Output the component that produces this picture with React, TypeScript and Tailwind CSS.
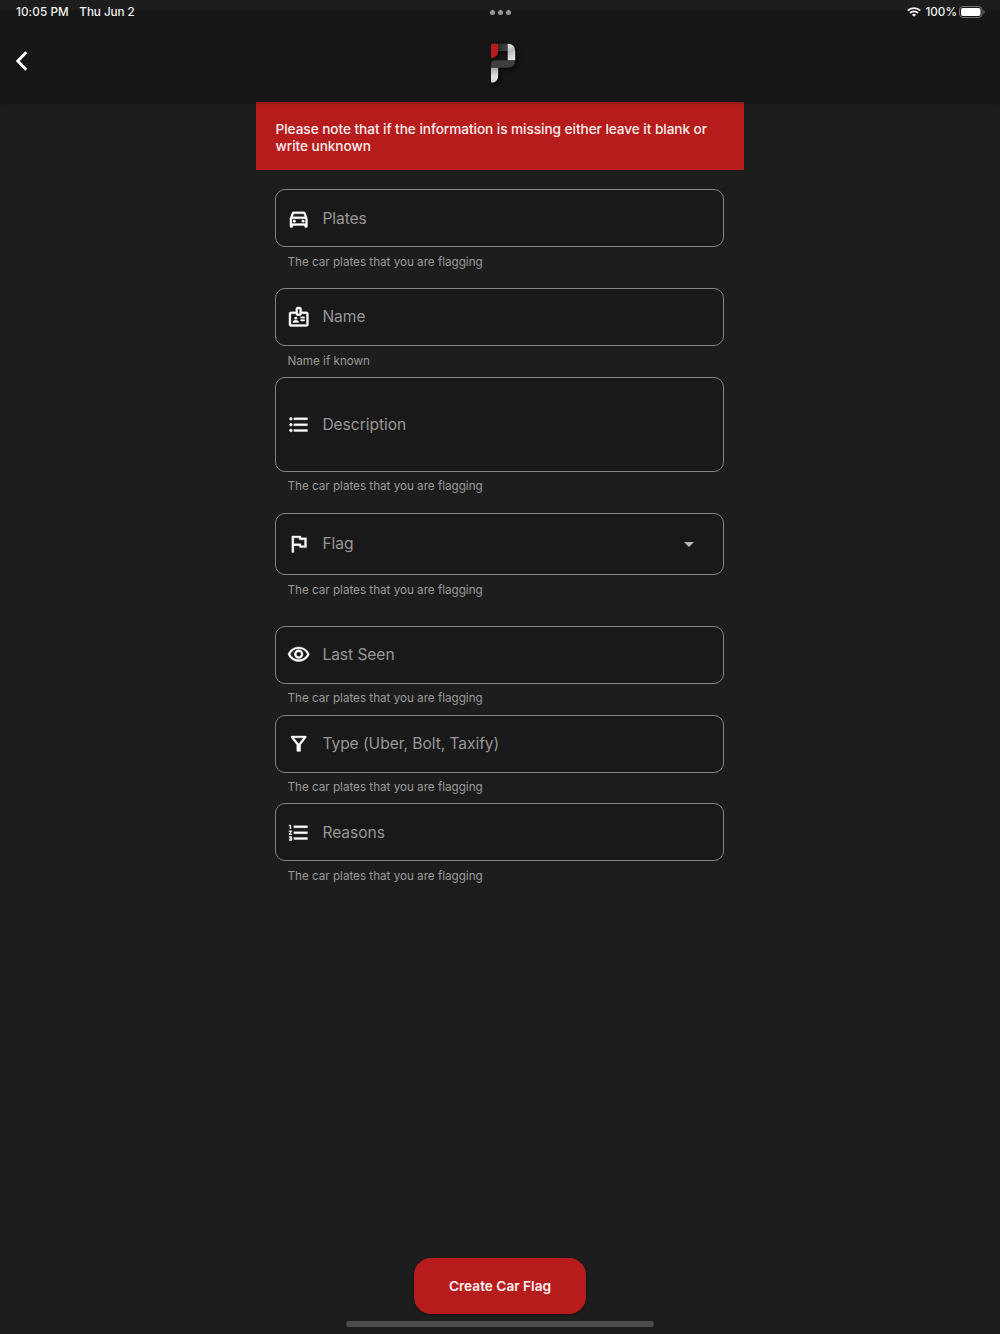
import type { IconType } from "react-icons";
import {
  MdArrowDropDown,
  MdFormatListBulleted,
  MdFormatListNumbered,
  MdOutlineBadge,
  MdOutlineDirectionsCar,
  MdOutlineFilterAlt,
  MdOutlineFlag,
  MdOutlineVisibility,
} from "react-icons/md";

interface Field {
  label: string;
  helper: string;
  icon: IconType;
  box: string;
  spacing: string;
  helperGap: string;
  dropdown?: boolean;
}

const helper = "The car plates that you are flagging";

const fields: Field[] = [
  { label: "Plates", helper, icon: MdOutlineDirectionsCar, box: "h-[58px] pt-0.5", spacing: "mb-[41px]", helperGap: "mt-[7px]" },
  { label: "Name", helper: "Name if known", icon: MdOutlineBadge, box: "h-[58px]", spacing: "mb-[31px]", helperGap: "mt-[7px]" },
  { label: "Description", helper, icon: MdFormatListBulleted, box: "h-[95px]", spacing: "mb-[41px]", helperGap: "mt-1.5" },
  { label: "Flag", helper, icon: MdOutlineFlag, box: "h-[62px]", spacing: "mb-[51px]", helperGap: "mt-[7px]", dropdown: true },
  { label: "Last Seen", helper, icon: MdOutlineVisibility, box: "h-[58px]", spacing: "mb-[31px]", helperGap: "mt-1.5" },
  { label: "Type (Uber, Bolt, Taxify)", helper, icon: MdOutlineFilterAlt, box: "h-[58px]", spacing: "mb-[30px]", helperGap: "mt-1.5" },
  { label: "Reasons", helper, icon: MdFormatListNumbered, box: "h-[58px] pt-0.5", spacing: "mb-[31px]", helperGap: "mt-[7px]" },
];

const StatusBar = () => (
  <div className="flex h-6 items-center justify-between bg-linear-to-b from-[#1d1d1d] from-[10px] to-[#161616] to-[10px] pl-4 pr-[15px] text-[11.7px] font-medium text-[#f2f2f2]">
    <div className="flex w-[200px] gap-[10.5px] pt-0.5">
      <span className="tracking-[0.1px]">10:05 PM</span>
      <span className="tracking-[-0.05px]">Thu Jun 2</span>
    </div>
    <div className="flex gap-[3px]">
      <span className="size-[5px] rounded-full bg-[#9a9a9a]" />
      <span className="size-[5px] rounded-full bg-[#9a9a9a]" />
      <span className="size-[5px] rounded-full bg-[#9a9a9a]" />
    </div>
    <div className="flex w-[200px] items-center justify-end">
      <svg className="mr-1 h-[10px] w-[14px]" viewBox="0 0 14 10" fill="none" stroke="#fff" strokeWidth="1.8">
        <path d="M0.7 3.6a9 9 0 0 1 12.6 0" />
        <path d="M3 6a5.7 5.7 0 0 1 8 0" />
        <path d="M7 9.8 5 7.8a2.9 2.9 0 0 1 4 0z" fill="#fff" stroke="none" />
      </svg>
      <span className="mr-[2px] pt-0.5">100%</span>
      <svg className="h-[12px] w-[26px]" viewBox="0 0 26 12">
        <rect x="0.5" y="0.5" width="22.5" height="11" rx="3.4" fill="none" stroke="#747474" />
        <rect x="2" y="2" width="19.5" height="8" rx="2" fill="#fff" />
        <path d="M24.3 4.2q1.4.4 1.4 1.8t-1.4 1.8z" fill="#747474" />
      </svg>
    </div>
  </div>
);

const Logo = () => (
  <svg className="h-[48px] w-[36px] drop-shadow-[2px_2px_2px_rgba(0,0,0,0.7)]" viewBox="0 0 36 48">
    <defs>
      <linearGradient id="side" x1="0" y1="0" x2="0.3" y2="1">
        <stop offset="0" stopColor="#f2f2f2" />
        <stop offset="0.5" stopColor="#b5b5b5" />
        <stop offset="1" stopColor="#e6e6e6" />
      </linearGradient>
      <linearGradient id="stem" x1="0" y1="0" x2="0" y2="1">
        <stop offset="0" stopColor="#a5a5a5" />
        <stop offset="0.6" stopColor="#e4e4e4" />
        <stop offset="1" stopColor="#d2d2d2" />
      </linearGradient>
      <linearGradient id="top" x1="0" y1="0" x2="1" y2="0">
        <stop offset="0" stopColor="#2a2a2a" />
        <stop offset="1" stopColor="#414141" />
      </linearGradient>
    </defs>
    <path d="M8 3.8h9.6v7.2H8z" fill="url(#top)" />
    <path d="M1 5.3q0-1.5 1.5-1.5H8v8q0 6-7 6.2z" fill="#b71c1c" />
    <path d="M17.7 3.8q7.5 0 7.5 7.5v9.2h-7.5z" fill="url(#side)" />
    <path d="M1 27.8v-3.5q0-4 4-4h20.2q0 7.5-7 7.5z" fill="#3e3e3e" />
    <path d="M1 27.8h7.2v7q0 7.5-5.7 7.9-1.5 0-1.5-1.5z" fill="url(#stem)" />
  </svg>
);

const FormField = ({ field }: { field: Field }) => {
  const Icon = field.icon;
  return (
    <div className={`relative ${field.spacing}`}>
      <div className={`flex items-center rounded-[10px] border border-[#858585] bg-[#191919] pl-[11px] ${field.box}`}>
        <Icon className="size-[23.4px] text-white [&_path:not([fill=none]):not(:first-child)]:[stroke-width:0.35]" />
        <span className="ml-[12px] text-[15.6px] tracking-[-0.06px] text-[#979797]">{field.label}</span>
        {field.dropdown && <MdArrowDropDown className="mb-px ml-auto mr-[22px] size-[24px] text-[#b9b9b9]" />}
      </div>
      {/* helper text hangs below the box */}
      <p className={`absolute left-[12.5px] top-full text-[11.7px] leading-4 tracking-[-0.02px] text-[#999999] ${field.helperGap}`}>
        {field.helper}
      </p>
    </div>
  );
};

const App = () => {
  return (
    <div className="flex h-[1334px] w-[1000px] flex-col bg-[#1d1d1d] font-['Inter',sans-serif]">
      <header className="relative z-10 h-[102px] shrink-0 bg-[#161616] shadow-[0_1px_4px_rgba(0,0,0,0.35)]">
        <StatusBar />
        <div className="flex h-[78px] items-start justify-between pl-4 pr-4">
          <svg className="mt-[27px] h-5 w-3" viewBox="0 0 12 20" fill="none" stroke="#fff" strokeWidth="2.8">
            <path d="M10.3 1.2 1.8 10l8.5 8.8" />
          </svg>
          <div className="mr-[-15.5px] mt-4">
            <Logo />
          </div>
          <span className="w-3" />
        </div>
      </header>

      <main className="mx-auto w-[488px] flex-1">
        <div className="h-[68px] bg-[#b71c1c] pl-[19.5px] pt-[19px] text-[13.65px] font-medium leading-[17px] tracking-[-0.06px] text-[#fbeeee]">
          Please note that if the information is missing either leave it blank or
          <br />
          write unknown
        </div>
        <div className="ml-[19px] mr-5 pt-[19px]">
          {fields.map((field) => (
            <FormField key={field.label} field={field} />
          ))}
        </div>
      </main>

      <footer className="flex flex-col items-center">
        <button className="h-[56px] w-[172px] rounded-[17px] bg-[#b71c1c] text-[13.65px] font-semibold text-[#fdf3f3] shadow-[0_1px_3px_rgba(0,0,0,0.4)]">
          Create Car Flag
        </button>
        <div className="mb-[7px] mt-[7px] h-[6px] w-[308px] rounded-full bg-[#4c4c4c]" />
      </footer>
    </div>
  );
};

export default App;
